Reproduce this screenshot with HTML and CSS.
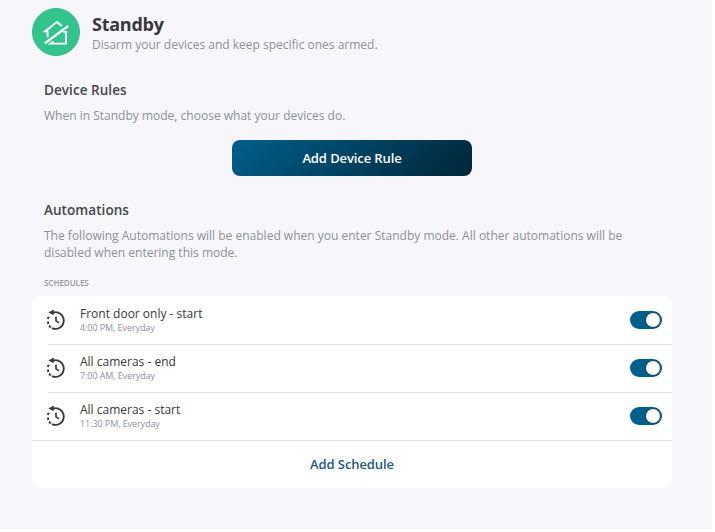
FILE: index.html
```html
<!DOCTYPE html>
<html lang="en">
<head>
    <meta charset="UTF-8">
    <meta name="viewport" content="width=device-width, initial-scale=1.0">
    <title>Standby</title>
    <link rel="stylesheet" href="styles.css">
</head>
<body>
    <svg class="symbols" width="0" height="0">
        <symbol id="icon-schedule" viewBox="0 0 24 24">
            <path d="M9 4.6a8.3 8.3 0 1 1-1 15.5" fill="none" stroke="currentColor" stroke-width="1.8"/>
            <path d="M6.8 19.5l-1.8-1.7M4.4 16l-.7-2.4M3.8 11l.9-2.3" fill="none" stroke="currentColor" stroke-width="1.9"/>
            <path d="M4.4 4.5L9.8 1.6v5.7z" fill="currentColor"/>
            <path d="M12 8.4v4.5l3 2" fill="none" stroke="currentColor" stroke-width="1.7"/>
        </symbol>
    </svg>
    <main class="page">
        <header class="mode-header">
            <div class="mode-icon">
                <svg width="48" height="48" viewBox="0 0 48 48" fill="none" stroke="#fff" stroke-width="1.9">
                    <path d="M15.6 29.2v-5.8h-2.5L24.9 14l4.9 4.1"/>
                    <path d="M31.4 24H34v11.6H18.4l3-2.4"/>
                    <path d="M12.8 35.3L36.2 18" stroke-width="2.2"/>
                </svg>
            </div>
            <div>
                <h1 class="mode-title">Standby</h1>
                <p class="mode-text">Disarm your devices and keep specific ones armed.</p>
            </div>
        </header>

        <section class="rules">
            <h2 class="section-title">Device Rules</h2>
            <p class="section-text">When in Standby mode, choose what your devices do.</p>
            <button class="rule-button">Add Device Rule</button>
        </section>

        <section class="automations">
            <h2 class="section-title">Automations</h2>
            <p class="section-text">The following Automations will be enabled when you enter Standby mode. All other automations will be disabled when entering this mode.</p>
            <h3 class="list-label">SCHEDULES</h3>
        </section>

        <div class="card">
            <div class="schedule">
                <svg class="schedule-icon"><use href="#icon-schedule"/></svg>
                <div class="schedule-info">
                    <div class="schedule-name">Front door only - start</div>
                    <div class="schedule-time">4:00 PM, Everyday</div>
                </div>
                <span class="toggle"><span class="knob"></span></span>
            </div>
            <div class="schedule">
                <svg class="schedule-icon"><use href="#icon-schedule"/></svg>
                <div class="schedule-info">
                    <div class="schedule-name">All cameras - end</div>
                    <div class="schedule-time">7:00 AM, Everyday</div>
                </div>
                <span class="toggle"><span class="knob"></span></span>
            </div>
            <div class="schedule">
                <svg class="schedule-icon"><use href="#icon-schedule"/></svg>
                <div class="schedule-info">
                    <div class="schedule-name">All cameras - start</div>
                    <div class="schedule-time">11:30 PM, Everyday</div>
                </div>
                <span class="toggle"><span class="knob"></span></span>
            </div>
            <button class="add-schedule">Add Schedule</button>
        </div>
    </main>
</body>
</html>
```
FILE: styles.css
```css
* {
    box-sizing: border-box;
}
html {
    background: #fff;
}
body {
    margin: 0;
    font-family: "Open Sans", "Noto Sans", sans-serif;
    color: #37383c;
}
h1, h2, h3, p {
    margin: 0;
}
.symbols {
    display: block;
}
.page {
    width: 712px;
    height: 529px;
    padding: 8px 40px 0 32px;
    background: #f6f6fb;
}
.mode-header {
    display: flex;
    align-items: flex-start;
    gap: 12px;
    height: 48px;
}
.mode-icon {
    width: 48px;
    height: 48px;
    border-radius: 50%;
    background: #33c48e;
    border: 1px solid #2fbd88;
}
.mode-icon svg {
    display: block;
    margin: -1px;
}
.mode-title {
    font-size: 18px;
    line-height: 24px;
    font-weight: 700;
    letter-spacing: -0.25px;
    margin-top: 4px;
}
.mode-text, .section-text {
    font-size: 12px;
    line-height: 17px;
    color: #8d919c;
}
.rules {
    padding: 24px 12px 0;
    height: 144px;
}
.automations {
    padding: 0 12px;
    height: 96px;
}
.section-title {
    font-size: 13.5px;
    line-height: 20px;
    font-weight: 600;
    letter-spacing: 0.06px;
    color: #46474b;
}
.section-text {
    margin-top: 7px;
    letter-spacing: 0.005px;
}
.rule-button {
    display: block;
    width: 240px;
    height: 36px;
    margin: 16px auto 0;
    padding: 0;
    border: none;
    border-radius: 8px;
    background: linear-gradient(135deg, #005f8c, #002638);
    color: #fff;
    font: 600 13px "Open Sans", sans-serif;
    letter-spacing: -0.1px;
}
.list-label {
    margin-top: 16px;
    font-size: 8px;
    line-height: 12px;
    font-weight: 600;
    letter-spacing: -0.03px;
    color: #9699a3;
}
.card {
    height: 192px;
    background: #fff;
    border-radius: 10px;
}
.schedule {
    display: flex;
    align-items: center;
    height: 48px;
    margin-left: 16px;
    padding-right: 10px;
}
.schedule + .schedule {
    border-top: 1px solid #e1e2e6;
    padding-bottom: 1px;
}
.schedule-icon {
    width: 24px;
    height: 24px;
    margin: 0 12px 0 -4px;
    color: #37383c;
}
.schedule-info {
    flex: 1;
}
.schedule-name {
    font-size: 12px;
    line-height: 16px;
}
.schedule-time {
    font-size: 9px;
    line-height: 12px;
    letter-spacing: -0.08px;
    color: #8d8f9f;
}
.toggle {
    display: flex;
    align-items: center;
    justify-content: flex-end;
    width: 32px;
    height: 18px;
    padding-right: 2px;
    border-radius: 9px;
    background: #005f8a;
}
.knob {
    width: 14px;
    height: 14px;
    border-radius: 50%;
    background: #fff;
    box-shadow: 0 0 2px rgba(0, 0, 0, 0.6);
}
.add-schedule {
    display: block;
    width: 100%;
    height: 48px;
    padding: 0 0 2px;
    border: none;
    border-top: 1px solid #e1e2e6;
    background: none;
    color: #23597a;
    font: 600 13px "Open Sans", sans-serif;
    letter-spacing: -0.1px;
}
```
